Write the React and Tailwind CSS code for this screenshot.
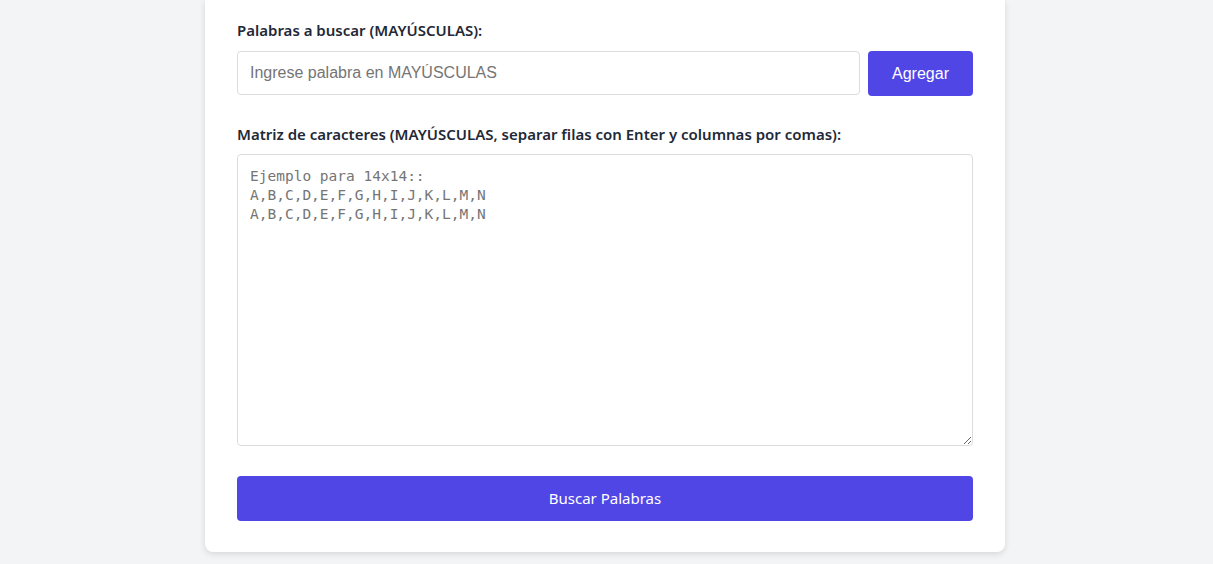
import { useState } from 'react';

const PLACEHOLDER = `Ejemplo para 14x14::
A,B,C,D,E,F,G,H,I,J,K,L,M,N
A,B,C,D,E,F,G,H,I,J,K,L,M,N`;

export default function App() {
  const [word, setWord] = useState('');
  const [matrix, setMatrix] = useState('');

  return (
    <div className="min-h-screen bg-[#f3f4f6] flex justify-center pr-[3px] font-['Noto_Sans',sans-serif]">
      <div className="w-[800px] h-[552px] bg-white rounded-b-lg shadow-[0_2px_6px_rgba(0,0,0,0.12)] px-8 pt-[20px] pb-8">
        <label className="block text-[15px] leading-5 font-semibold text-[#1f2937] mb-[11px]">
          Palabras a buscar (MAYÚSCULAS):
        </label>
        <div className="flex gap-2">
          <input
            value={word}
            onChange={(e) => setWord(e.target.value)}
            placeholder="Ingrese palabra en MAYÚSCULAS"
            className="flex-1 h-[44px] border border-[#dcdcdc] rounded-[4px] px-3 text-base font-['Liberation_Sans',Arial,sans-serif] placeholder:text-[#757575] outline-none"
          />
          <button
            type="button"
            className="w-[105px] h-[45px] bg-[#5046e5] text-white rounded-[4px] text-base font-['Liberation_Sans',Arial,sans-serif]"
          >
            Agregar
          </button>
        </div>

        <label className="block mt-[28px] text-[15px] leading-5 font-semibold text-[#1f2937] mb-[10px]">
          Matriz de caracteres (MAYÚSCULAS, separar filas con Enter y columnas por comas):
        </label>
        <textarea
          value={matrix}
          onChange={(e) => setMatrix(e.target.value)}
          placeholder={PLACEHOLDER}
          className="block w-full h-[292px] border border-[#dcdcdc] rounded-[4px] px-3 pt-[12px] text-[14.5px] leading-[19px] font-['DejaVu_Sans_Mono',monospace] placeholder:text-[#757575] outline-none"
        />

        <button
          type="button"
          className="mt-[30px] w-full h-[45px] bg-[#5046e5] text-white rounded-[4px] text-[15px]"
        >
          Buscar Palabras
        </button>
      </div>
    </div>
  );
}
